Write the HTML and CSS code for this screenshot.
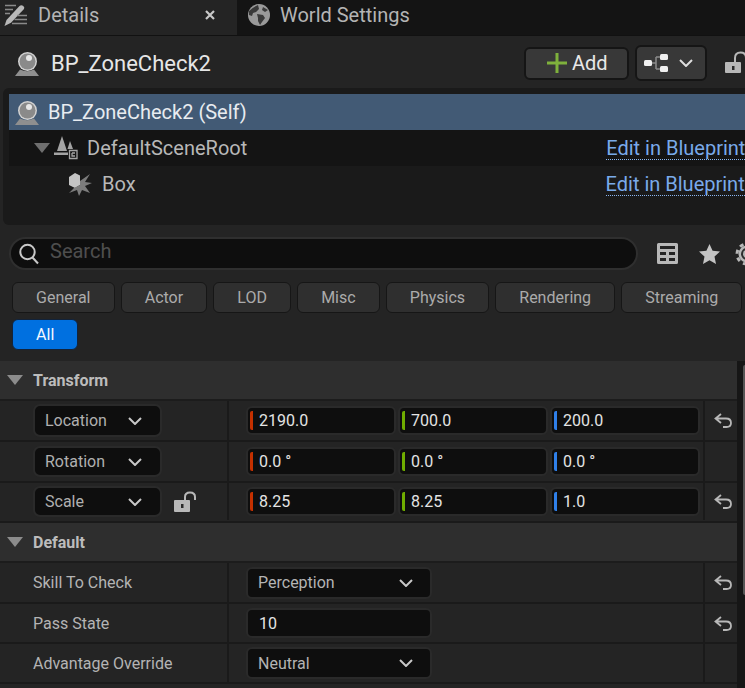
FILE: index.html
```html
<!DOCTYPE html>
<html lang="en">
<head>
<meta charset="utf-8">
<title>Details</title>
<link rel="stylesheet" href="styles.css">
</head>
<body>
<div class="page">
  <div class="tabs">
    <div class="tab tab-active">
      <svg class="icon-details" viewBox="0 0 24 24"><path class="fill-soft" d="M0.500 23 L2.500 17 L15.500 3 Q17 1.500 19 2.700 Q21 4.200 20 6 L7 19.800 Z"/><path class="line-dim" d="M1 2.500 H12 M1 6.500 H9 M1 10.500 H6 M13 12.500 H23 M10.500 16.500 H23 M8 20.500 H23"/></svg>
      <span class="tab-label">Details</span>
      <svg class="icon-close" viewBox="0 0 12 12"><path d="M2 2 L10 10 M10 2 L2 10"/></svg>
    </div>
    <div class="tab tab-other">
      <svg class="icon-globe" viewBox="0 0 22 22"><circle class="globe-disc" cx="11" cy="11" r="11"/><path class="globe-land" d="M1 7 Q5 3 10 1 L11 5 L8 8 L5 9 L4 12 L1 11 Z M9 10 L15 11 L17 14 L14 18 L12 21 L10 17 L10 14 Z M15 3 L20 6 L17 8 L14 6 Z"/></svg>
      <span class="tab-label">World Settings</span>
    </div>
  </div>

  <div class="head">
    <svg class="icon-actor" viewBox="0 0 24 25"><use href="#actor"/></svg>
    <span class="head-title">BP_ZoneCheck2</span>
    <button class="btn btn-add">
      <svg class="icon-plus" viewBox="0 0 20 20"><path d="M10 0 V20 M0 10 H20"/></svg>
      <span>Add</span>
    </button>
    <button class="btn btn-tree">
      <svg class="icon-hier" viewBox="0 0 24 18"><path class="hier-link" d="M7 9 H12 M12 3 V15 M12 3 H17 M12 15 H17"/><rect class="hier-node" x="0" y="6" width="8" height="6" rx="1.500"/><rect class="hier-node" x="16" y="0" width="8" height="6" rx="1.500"/><rect class="hier-node" x="16" y="12" width="8" height="6" rx="1.500"/></svg>
      <svg class="chev chev-light" viewBox="0 0 14 8"><path d="M1 1 L7 7 L13 1"/></svg>
    </button>
    <svg class="icon-lock-head" viewBox="0 0 20 24"><path class="lock-arc" d="M10 12 V7 Q10 1.500 15.500 1.500 Q21 1.500 21 7"/><rect class="lock-body" x="0" y="11" width="16" height="11" rx="1"/><rect class="lock-hole" x="7" y="15" width="2.500" height="4"/></svg>
  </div>

  <div class="tree">
    <div class="tree-row tree-selected">
      <svg class="icon-actor-small" viewBox="0 0 24 25"><use href="#actor"/></svg>
      <span>BP_ZoneCheck2 (Self)</span>
    </div>
    <div class="tree-row tree-dark">
      <svg class="tree-arrow" viewBox="0 0 16 10"><path d="M0 0 H16 L8 10 Z"/></svg>
      <svg class="icon-scene" viewBox="0 0 24 24"><path class="scene-fill" d="M3 15 L8 0 L13 15 Z M13.500 13 L16 5 L19 13 Z"/><rect class="scene-fill" x="0" y="16.500" width="14" height="2.500"/><path class="scene-box" d="M15.500 14.500 H23 V22.500 H15.500 Z M18 17 H21 M18 17 V20 H21"/></svg>
      <span>DefaultSceneRoot</span>
      <a class="edit-link edit-root">Edit in Blueprint</a>
    </div>
    <div class="tree-row">
      <svg class="icon-box" viewBox="0 0 24 24"><path class="box-light" d="M1 5 L7 1 L12 3.500 L12 13 L7 16 L1 13 Z"/><path class="box-mid" d="M12 9 L22 2 L17 10 L24 11 L17 14 L22 21 L14 18 L11 24 L9 18 L1 21 L6 16 L12 13 Z"/></svg>
      <span>Box</span>
      <a class="edit-link edit-box">Edit in Blueprint</a>
    </div>
  </div>

  <div class="search-row">
    <div class="search">
      <svg class="icon-search" viewBox="0 0 20 22"><circle cx="8.500" cy="9" r="7.200"/><path d="M13.500 14.500 L19 20.500"/></svg>
      <span>Search</span>
    </div>
    <svg class="icon-table" viewBox="0 0 21 21"><path fill-rule="evenodd" d="M1.500 0 H19.500 Q21 0 21 1.500 V19.500 Q21 21 19.500 21 H1.500 Q0 21 0 19.500 V1.500 Q0 0 1.500 0 Z M3 3 V6 H18 V3 Z M3 9 V12 H9 V9 Z M12 9 V12 H18 V9 Z M3 15 V18 H9 V15 Z M12 15 V18 H18 V15 Z"/></svg>
    <svg class="icon-star" viewBox="0 0 21 20"><path d="M10.500 0 L13.600 6.700 L21 7.600 L15.500 12.600 L17 20 L10.500 16.300 L4 20 L5.500 12.600 L0 7.600 L7.400 6.700 Z"/></svg>
    <svg class="icon-gear" viewBox="0 0 10 24"><circle class="gear-teeth" cx="12" cy="12" r="10"/><circle class="gear-ring" cx="12" cy="12" r="8.500"/><circle class="gear-hole" cx="12" cy="12" r="6"/><circle class="gear-ring" cx="12" cy="12" r="4"/></svg>
  </div>

  <div class="filters">
    <button class="filter">General</button>
    <button class="filter">Actor</button>
    <button class="filter">LOD</button>
    <button class="filter">Misc</button>
    <button class="filter">Physics</button>
    <button class="filter">Rendering</button>
    <button class="filter">Streaming</button>
    <button class="filter filter-on">All</button>
  </div>

  <div class="body">
    <div class="groups">
      <div class="group-head">
        <svg class="group-arrow" viewBox="0 0 16 10"><path d="M0 0 H16 L8 10 Z"/></svg>
        <span>Transform</span>
      </div>
      <div class="row">
        <div class="cell-name">
          <div class="picker picker-tall"><span>Location</span><svg class="chev" viewBox="0 0 14 8"><path d="M1 1 L7 7 L13 1"/></svg></div>
        </div>
        <div class="cell-value">
          <div class="num"><i class="axis axis-x"></i><span>2190.0</span></div>
          <div class="num"><i class="axis axis-y"></i><span>700.0</span></div>
          <div class="num"><i class="axis axis-z"></i><span>200.0</span></div>
        </div>
        <div class="cell-reset"><svg class="icon-reset" viewBox="0 0 18 15"><path d="M7 1 L1.500 5.500 L7 10 M1.500 5.500 H12 Q17 5.500 17 10 Q17 14 12.500 14 H9"/></svg></div>
      </div>
      <div class="row">
        <div class="cell-name">
          <div class="picker"><span>Rotation</span><svg class="chev" viewBox="0 0 14 8"><path d="M1 1 L7 7 L13 1"/></svg></div>
        </div>
        <div class="cell-value">
          <div class="num"><i class="axis axis-x"></i><span>0.0 °</span></div>
          <div class="num"><i class="axis axis-y"></i><span>0.0 °</span></div>
          <div class="num"><i class="axis axis-z"></i><span>0.0 °</span></div>
        </div>
        <div class="cell-reset"></div>
      </div>
      <div class="row row-short row-scale">
        <div class="cell-name">
          <div class="picker"><span>Scale</span><svg class="chev" viewBox="0 0 14 8"><path d="M1 1 L7 7 L13 1"/></svg></div>
          <svg class="icon-lock" viewBox="0 0 22 22"><path class="lock-arc" d="M11 9 V6 Q11 1.500 16 1.500 Q21 1.500 21 6 V9"/><rect class="lock-body" x="0" y="9" width="16" height="12" rx="1"/><rect class="lock-hole" x="7" y="13" width="2.500" height="4"/></svg>
        </div>
        <div class="cell-value">
          <div class="num"><i class="axis axis-x"></i><span>8.25</span></div>
          <div class="num"><i class="axis axis-y"></i><span>8.25</span></div>
          <div class="num"><i class="axis axis-z"></i><span>1.0</span></div>
        </div>
        <div class="cell-reset"><svg class="icon-reset" viewBox="0 0 18 15"><path d="M7 1 L1.500 5.500 L7 10 M1.500 5.500 H12 Q17 5.500 17 10 Q17 14 12.500 14 H9"/></svg></div>
      </div>

      <div class="group-head">
        <svg class="group-arrow" viewBox="0 0 16 10"><path d="M0 0 H16 L8 10 Z"/></svg>
        <span>Default</span>
      </div>
      <div class="row">
        <div class="cell-name"><span class="prop">Skill To Check</span></div>
        <div class="cell-value">
          <div class="enum"><span>Perception</span><svg class="chev" viewBox="0 0 14 8"><path d="M1 1 L7 7 L13 1"/></svg></div>
        </div>
        <div class="cell-reset"><svg class="icon-reset" viewBox="0 0 18 15"><path d="M7 1 L1.500 5.500 L7 10 M1.500 5.500 H12 Q17 5.500 17 10 Q17 14 12.500 14 H9"/></svg></div>
      </div>
      <div class="row row-short">
        <div class="cell-name"><span class="prop">Pass State</span></div>
        <div class="cell-value">
          <div class="enum enum-text"><span>10</span></div>
        </div>
        <div class="cell-reset"><svg class="icon-reset" viewBox="0 0 18 15"><path d="M7 1 L1.500 5.500 L7 10 M1.500 5.500 H12 Q17 5.500 17 10 Q17 14 12.500 14 H9"/></svg></div>
      </div>
      <div class="row row-short">
        <div class="cell-name"><span class="prop">Advantage Override</span></div>
        <div class="cell-value">
          <div class="enum"><span>Neutral</span><svg class="chev" viewBox="0 0 14 8"><path d="M1 1 L7 7 L13 1"/></svg></div>
        </div>
        <div class="cell-reset"></div>
      </div>
    </div>
    <div class="scrollbar"><div class="scroll-thumb"></div></div>
  </div>
</div>

<svg class="defs" width="0" height="0">
  <symbol id="actor" viewBox="0 0 24 25">
    <circle cx="12.500" cy="10.500" r="9.500" fill="#d2d2d2"/>
    <circle cx="12.500" cy="10.500" r="8" fill="#8a8a8a"/>
    <circle cx="14" cy="7" r="3" fill="#e8e8e8"/>
    <path d="M5 18.500 Q12 22 19 18.500 L24 25 H0 Z" fill="#8f8f8f"/>
  </symbol>
</svg>
</body>
</html>
```
FILE: styles.css
```css
* { box-sizing: border-box; }
html, body { margin: 0; padding: 0; background: #242424; }
body { font-family: Roboto, "Liberation Sans", sans-serif; color: #c0c0c0; }
.page { width: 745px; height: 688px; overflow: hidden; background: #242424; }
.defs { position: absolute; }
button { font-family: inherit; cursor: default; }

.tabs { display: flex; height: 36px; background: #141414; border-bottom: 1px solid #111; }
.tab { display: flex; align-items: center; padding-bottom: 5px; font-size: 20px; color: #b4b4b4; }
.tab-active { width: 237px; background: #242424; padding-left: 4px; }
.tab-other { padding-left: 11px; }
.tab-label { margin-left: 10px; }
.icon-details { width: 24px; height: 24px; flex: none; }
.fill-soft { fill: #b8b8b8; }
.line-dim { stroke: #8a8a8a; stroke-width: 1.500; fill: none; }
.icon-close { width: 12px; height: 12px; margin-left: auto; margin-right: 21px; }
.icon-close path { stroke: #c8c8c8; stroke-width: 2.200; fill: none; }
.icon-globe { width: 22px; height: 22px; flex: none; }
.globe-disc { fill: #9a9a9a; }
.globe-land { fill: #3a3a3a; }

.head { display: flex; align-items: center; height: 52px; padding: 2px 0 0 15px; }
.icon-actor { width: 24px; height: 25px; flex: none; }
.head-title { flex: 1; margin-left: 12px; font-size: 22px; color: #e6e6e6; }
.btn { display: flex; align-items: center; flex: none; background: #383838; border: 2px solid #151515; border-radius: 6px; padding: 0; color: #e8e8e8; }
.btn-add { width: 105px; height: 33px; padding-left: 21px; font-size: 20px; }
.btn-add span { margin-left: 5px; }
.icon-plus { width: 20px; height: 20px; }
.icon-plus path { stroke: #7fb13c; stroke-width: 3; fill: none; }
.btn-tree { width: 72px; height: 36px; margin-left: 6px; padding-left: 7px; }
.icon-hier { width: 24px; height: 18px; flex: none; }
.hier-link { stroke: #8a8a8a; stroke-width: 1.500; fill: none; }
.hier-node { fill: #f0f0f0; }
.chev { width: 14px; height: 8px; flex: none; }
.chev path { stroke: #c8c8c8; stroke-width: 2; fill: none; }
.chev-light { margin-left: 11px; }
.chev-light path { stroke: #dedede; }
.icon-lock-head { width: 20px; height: 24px; margin-left: 18px; flex: none; }
.lock-arc { stroke: #b8b8b8; stroke-width: 2; fill: none; }
.lock-body { fill: #b8b8b8; }
.lock-hole { fill: #2a2a2a; }

.tree { margin-left: 3px; height: 137px; padding: 6px 0 0 6px; background: #1a1a1a; border-radius: 6px 0 0 6px; }
.tree-row { display: flex; align-items: center; height: 36px; font-size: 20px; color: #b8b8b8; }
.tree-selected { background: #425a75; color: #e8ecf0; padding-left: 6px; }
.tree-dark { background: #141414; }
.icon-actor-small { width: 24px; height: 25px; flex: none; margin-right: 9px; }
.tree-arrow { width: 16px; height: 10px; margin-left: 25px; flex: none; }
.tree-arrow path { fill: #6f6f6f; }
.icon-scene { width: 24px; height: 24px; margin-left: 4px; margin-right: 9px; flex: none; }
.scene-fill { fill: #a4a4a4; }
.scene-box { stroke: #a4a4a4; stroke-width: 1.300; fill: #141414; }
.icon-box { width: 24px; height: 24px; margin-left: 59px; margin-right: 10px; flex: none; }
.box-light { fill: #c4c4c4; }
.box-mid { fill: #7c7c7c; }
.edit-link { display: block; flex: none; width: 139px; overflow: hidden; white-space: nowrap; color: #7aaaea; border-bottom: 1px dotted #8ab6f0; line-height: 22px; margin-top: 1px; }
.edit-root { margin-left: 359px; }
.edit-box { margin-left: 470px; }

.search-row { display: flex; align-items: center; padding-left: 9px; margin-top: 12px; height: 33px; }
.search { display: flex; align-items: center; width: 629px; height: 33px; flex: none; background: #0e0e0e; border: 2px solid #2f2f2f; border-radius: 17px; padding-left: 8px; font-size: 20px; color: #4e4e4e; }
.search span { margin-left: 11px; margin-top: -5px; }
.icon-search { width: 20px; height: 22px; flex: none; }
.icon-search circle, .icon-search path { stroke: #c8c8c8; stroke-width: 2; fill: none; }
.icon-table { width: 21px; height: 21px; margin-left: 19px; flex: none; }
.icon-table path { fill: #b8b8b8; }
.icon-star { width: 21px; height: 20px; margin-left: 21px; flex: none; }
.icon-star path { fill: #c4c4c4; }
.icon-gear { width: 10px; height: 24px; margin-left: 15px; flex: none; }
.gear-teeth { fill: none; stroke: #b8b8b8; stroke-width: 3; stroke-dasharray: 4 3.850; }
.gear-ring { fill: #b8b8b8; }
.gear-hole { fill: #2e2e2e; }

.filters { display: flex; flex-wrap: wrap; gap: 6px; padding-left: 12px; margin-top: 12px; }
.filter { height: 31px; padding: 0 23.100px; background: #2f2f2f; border: 1px solid #161616; border-radius: 6px; font-size: 16px; color: #ababab; }
.filter-on { background: #0070e0; border-color: #12233b; color: #f4f8ff; }

.body { display: flex; margin-top: 11px; }
.groups { width: 737px; flex: none; }
.group-head { display: flex; align-items: center; height: 40px; padding-left: 7px; background: #2e2e2e; border-bottom: 2px solid #1c1c1c; font-size: 16px; font-weight: 700; color: #bcbcbc; }
.group-head span { margin-left: 10px; }
.group-arrow { width: 16px; height: 10px; flex: none; }
.group-arrow path { fill: #8c8c8c; }
.row { display: flex; height: 41px; background: #242424; border-bottom: 2px solid #1a1a1a; }
.row-short { height: 40px; }
.row-scale { padding-bottom: 1px; }
.cell-name { display: flex; align-items: center; width: 229px; flex: none; padding-left: 33px; border-right: 2px solid #1a1a1a; }
.prop { font-size: 16px; color: #b4b4b4; }
.cell-value { display: flex; align-items: center; gap: 2px; width: 476px; flex: none; padding-left: 17px; border-right: 2px solid #1a1a1a; }
.cell-reset { flex: 1; display: flex; align-items: center; justify-content: center; padding-left: 3px; }
.picker { display: flex; align-items: center; justify-content: space-between; width: 129px; height: 31px; padding: 0 18px 0 10px; background: #0e0e0e; border: 2px solid #2a2a2a; border-radius: 7px; font-size: 16px; color: #b0b0b0; }
.picker-tall { height: 33px; }
.icon-lock { width: 22px; height: 22px; margin-left: 12px; flex: none; }
.num { display: flex; align-items: center; width: 150px; height: 29px; background: #0e0e0e; border: 2px solid #2a2a2a; border-radius: 6px; font-size: 16px; color: #e4e4e4; }
.axis { display: block; width: 3px; height: 19px; margin-left: 2px; border-radius: 2px 0 0 2px; flex: none; }
.axis-x { background: #c43000; }
.axis-y { background: #70ad00; }
.axis-z { background: #2f80ea; }
.num span { margin-left: 6px; }
.enum { display: flex; align-items: center; justify-content: space-between; width: 186px; height: 32px; padding: 0 17px 0 10px; background: #0e0e0e; border: 2px solid #2a2a2a; border-radius: 6px; font-size: 16px; color: #b4b4b4; }
.enum-text { color: #e4e4e4; padding-left: 11px; height: 30px; }
.icon-reset { width: 18px; height: 15px; flex: none; }
.icon-reset path { stroke: #b8b8b8; stroke-width: 1.800; fill: none; }

.scrollbar { flex: 1; height: 327px; background: #161616; padding-left: 6px; padding-top: 4px; }
.scroll-thumb { width: 2px; height: 230px; background: #555; border-radius: 2px 0 0 2px; }
```
